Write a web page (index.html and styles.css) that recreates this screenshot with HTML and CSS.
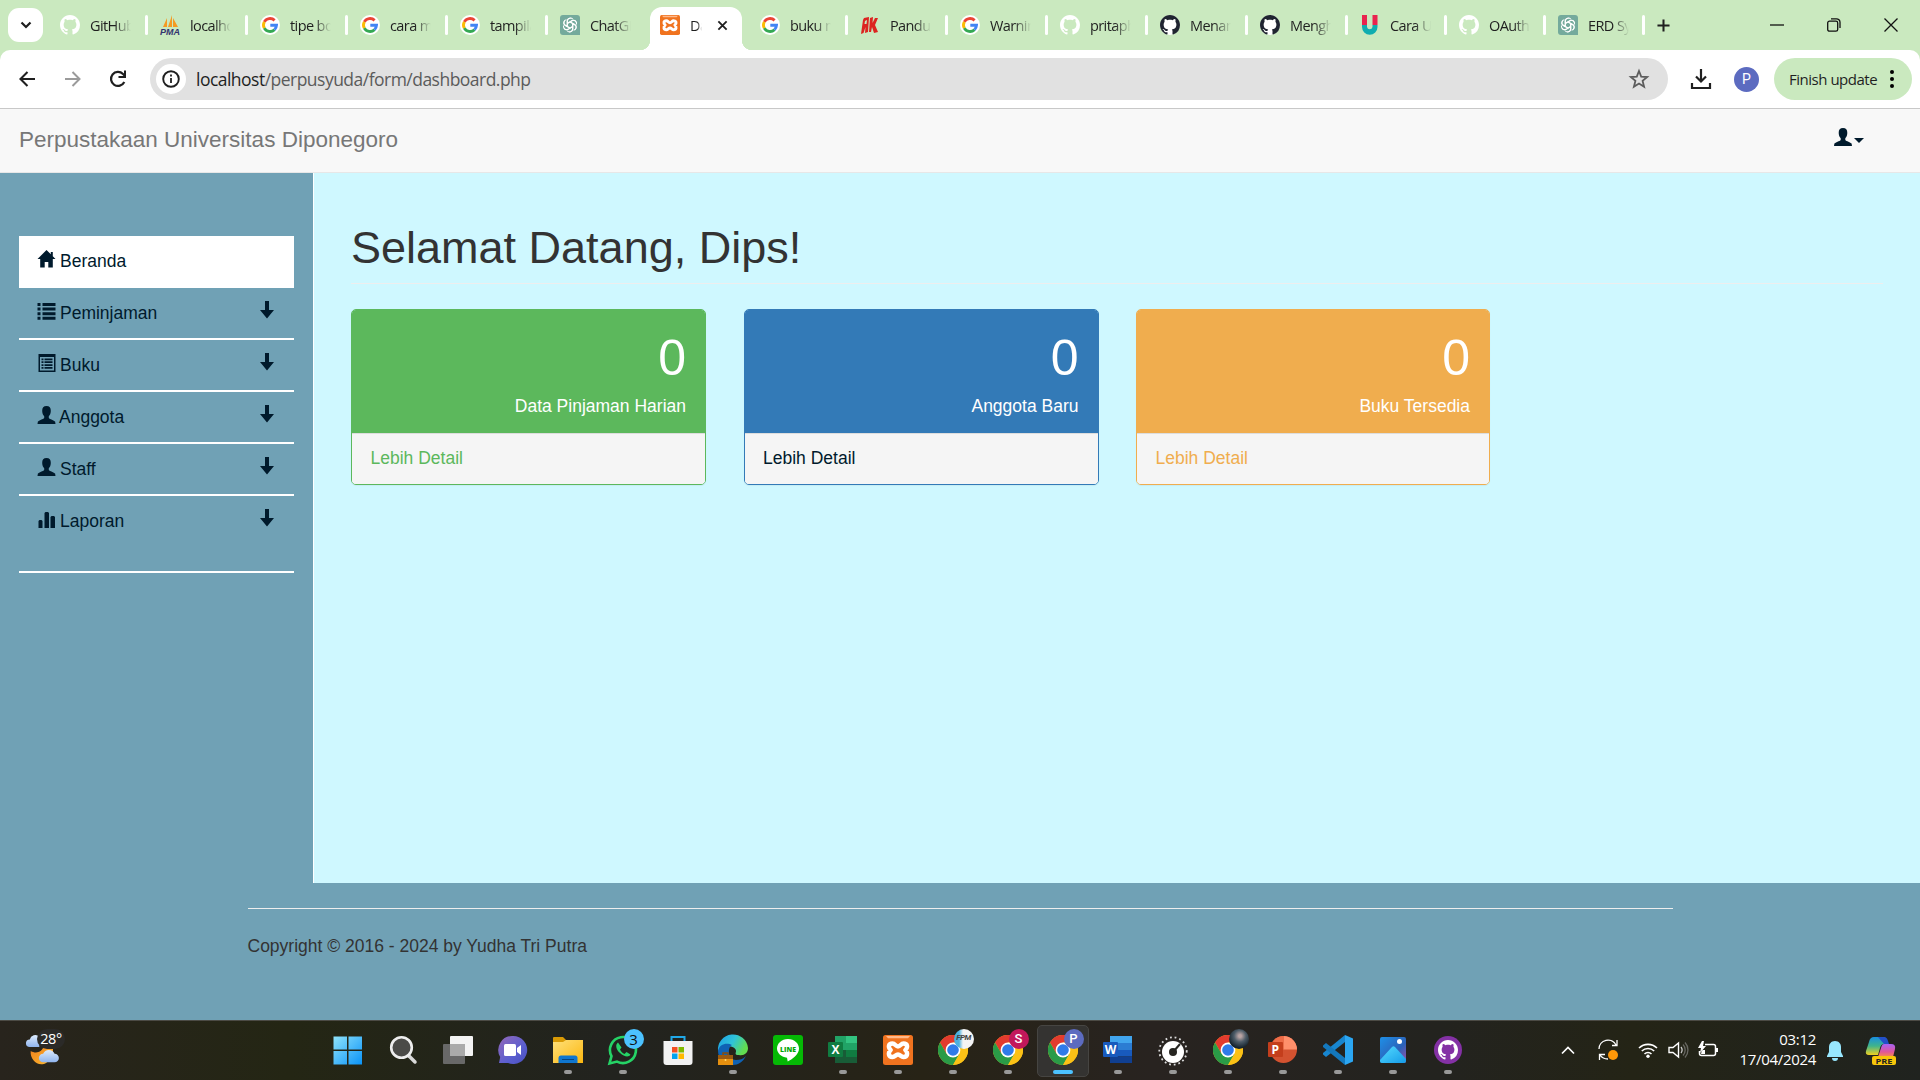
FILE: index.html
```html
<!DOCTYPE html>
<html lang="id">
<head>
<meta charset="utf-8">
<title>Dashboard</title>
<link rel="stylesheet" href="styles.css">
</head>
<body>
<svg class="defs" aria-hidden="true">
  <defs>
    <linearGradient id="gWin" x1="0" y1="0" x2="1" y2="1"><stop offset="0" stop-color="#8fe3fb"/><stop offset="1" stop-color="#0a93f7"/></linearGradient>
    <linearGradient id="gChat" x1="0" y1="0" x2="1" y2="1"><stop offset="0" stop-color="#9468b8"/><stop offset=".6" stop-color="#5b5fd0"/><stop offset="1" stop-color="#4a4fc0"/></linearGradient>
    <linearGradient id="gFold" x1="0" y1="0" x2="1" y2="1"><stop offset="0" stop-color="#ffe07a"/><stop offset="1" stop-color="#fbb70f"/></linearGradient>
    <linearGradient id="gEdge" x1="0" y1="0" x2="1" y2=".4"><stop offset="0" stop-color="#1d9fe6"/><stop offset=".55" stop-color="#2fc3d8"/><stop offset="1" stop-color="#62dd50"/></linearGradient>
    <linearGradient id="gPhoto" x1="0" y1="0" x2="1" y2="1"><stop offset="0" stop-color="#1e90e8"/><stop offset=".6" stop-color="#2c62b8"/><stop offset="1" stop-color="#a04fa8"/></linearGradient>
    <linearGradient id="gHill" x1="0" y1="0" x2="1" y2="1"><stop offset="0" stop-color="#56dcff"/><stop offset="1" stop-color="#159be8"/></linearGradient>
    <linearGradient id="gCopA" x1="0" y1="0" x2="0" y2="1"><stop offset="0" stop-color="#188fe0"/><stop offset=".5" stop-color="#3fb48b"/><stop offset="1" stop-color="#f0d020"/></linearGradient>
    <linearGradient id="gCopB" x1="0" y1="0" x2="0" y2="1"><stop offset="0" stop-color="#a763f5"/><stop offset=".6" stop-color="#e0569b"/><stop offset="1" stop-color="#f78f45"/></linearGradient>
    <linearGradient id="gMoon" x1="0" y1="0" x2="1" y2="1"><stop offset="0" stop-color="#f07c1c"/><stop offset="1" stop-color="#fbbb30"/></linearGradient>
    <linearGradient id="gCloud" x1="0" y1="0" x2="0" y2="1"><stop offset="0" stop-color="#dcebfd"/><stop offset="1" stop-color="#8fb4ee"/></linearGradient>
    <symbol id="octo" viewBox="0 0 16 16"><path d="M8 0C3.58 0 0 3.58 0 8c0 3.54 2.29 6.53 5.47 7.59.4.07.55-.17.55-.38 0-.19-.01-.82-.01-1.49-2.01.37-2.53-.49-2.69-.94-.09-.23-.48-.94-.82-1.13-.28-.15-.68-.52-.01-.53.63-.01 1.08.58 1.23.82.72 1.21 1.87.87 2.33.66.07-.52.28-.87.51-1.07-1.78-.2-3.64-.89-3.64-3.95 0-.87.31-1.59.82-2.15-.08-.2-.36-1.02.08-2.12 0 0 .67-.21 2.2.82.64-.18 1.32-.27 2-.27s1.36.09 2 .27c1.53-1.04 2.2-.82 2.2-.82.44 1.1.16 1.92.08 2.12.51.56.82 1.27.82 2.15 0 3.07-1.87 3.75-3.65 3.95.29.25.54.73.54 1.48 0 1.07-.01 1.93-.01 2.2 0 .21.15.46.55.38A8.01 8.01 0 0 0 16 8c0-4.42-3.58-8-8-8z"/></symbol>
    <symbol id="google" viewBox="0 0 20 20"><circle cx="10" cy="10" r="10" fill="#fff"/><g fill="none" stroke-width="2.9"><path d="M14.6 5.4A6.500 6.500 0 0 0 4.300 6.900" stroke="#ea4335"/><path d="M4.300 6.900a6.500 6.500 0 0 0 0 6.200" stroke="#fbbc05"/><path d="M4.300 13.100a6.500 6.500 0 0 0 10.200 1.600" stroke="#34a853"/><path d="M14.500 14.700a6.500 6.500 0 0 0 2-4.400H10.300" stroke="#4285f4"/></g></symbol>
    <symbol id="gpt" viewBox="0 0 20 20"><path d="M3 0h14a3 3 0 0 1 3 3v17H3a3 3 0 0 1-3-3V3a3 3 0 0 1 3-3z" fill="#74aa9c"/><g fill="none" stroke="#fff" stroke-width="1.05" stroke-linejoin="round"><g id="petal"><path d="M7.4 11.5V6.1a3 3 0 0 1 5.4-1.8M7.4 8.2l4.5-2.6a3 3 0 0 1 4.3 1.7"/></g><use href="#petal" transform="rotate(60 10 10)"/><use href="#petal" transform="rotate(120 10 10)"/><use href="#petal" transform="rotate(180 10 10)"/><use href="#petal" transform="rotate(240 10 10)"/><use href="#petal" transform="rotate(300 10 10)"/></g></symbol>
    <symbol id="xampp" viewBox="0 0 30 30"><rect width="30" height="30" rx="2.5" fill="#f0731f"/><path d="M3 1h24l-2 2.2H5z" fill="#ffb98a"/><path d="M9.5 8.500c-4 0-4.800 3.500-1.800 6.500-3 3-2.200 7 1.800 7 2.700 0 3-2.500 5.500-2.500s2.800 2.500 5.500 2.500c4 0 4.800-4 1.800-7 3-3 2.200-6.500-1.800-6.500-2.700 0-3 3-5.500 3s-2.800-3-5.500-3z" fill="none" stroke="#fff" stroke-width="4.400" stroke-linejoin="round"/></symbol>
    <symbol id="chrome" viewBox="0 0 30 30"><circle cx="15" cy="15" r="15" fill="#fbc116"/><path d="M15 7.500h13A15 15 0 0 0 2 7.500l6.500 11.200L15 15z" fill="#e33b2e"/><path d="M2 7.500A15 15 0 0 0 15 30l6.500-11.200H8.500z" fill="#2a9b47"/><path d="M15 30a15 15 0 0 0 13-22.500H15l6.500 11.300z" fill="#fbc116"/><circle cx="15" cy="15" r="7.400" fill="#fff"/><circle cx="15" cy="15" r="5.800" fill="#2f7bea"/></symbol>
    <symbol id="user" viewBox="0 0 18 18"><path d="M9 0C6 0 4.600 1.800 4.700 5c.1 2.500.9 4.200 2 5.200v1.700C5.800 13.300 1.300 14 .4 15.600L0 18h18l-.4-2.400c-.9-1.600-5.400-2.300-6.300-3.700v-1.700c1.100-1 1.900-2.700 2-5.200C13.400 1.800 12 0 9 0z"/></symbol>
    <symbol id="down" viewBox="0 0 14 18"><path d="M5 0h4v9h5l-7 8.500L0 9h5z"/></symbol>
  </defs>
</svg>

<header class="tabs">
  <div class="tab-search"><svg width="12" height="8" viewBox="0 0 12 8"><path d="M1.500 1.500 6 6l4.500-4.500" fill="none" stroke="#1f1f1f" stroke-width="2.200"/></svg></div>
  <div class="tab"><svg class="fav" fill="#fff"><use href="#octo"/></svg><span class="tt">GitHub</span></div>
  <div class="tab"><svg class="fav" viewBox="0 0 20 20"><path d="M3 12 7 3v9zM8 12 12 0v12zM13 12V3l5 9z" fill="#f59a22"/><text x="0" y="19.500" class="pma" textLength="20" lengthAdjust="spacingAndGlyphs">PMA</text></svg><span class="tt">localhost</span></div>
  <div class="tab"><svg class="fav"><use href="#google"/></svg><span class="tt">tipe boo</span></div>
  <div class="tab"><svg class="fav"><use href="#google"/></svg><span class="tt">cara me</span></div>
  <div class="tab"><svg class="fav"><use href="#google"/></svg><span class="tt">tampila</span></div>
  <div class="tab no-sep"><svg class="fav"><use href="#gpt"/></svg><span class="tt">ChatGP</span></div>
  <div class="tab active"><svg class="fav"><use href="#xampp"/></svg><span class="tt">Da</span><svg class="close" viewBox="0 0 12 12"><path d="m1.500 1.500 9 9m0-9-9 9" stroke="#1f1f1f" stroke-width="2"/></svg></div>
  <div class="tab"><svg class="fav"><use href="#google"/></svg><span class="tt">buku m</span></div>
  <div class="tab"><svg class="fav" viewBox="0 0 20 20"><path d="M4 3 9 2 8 17l-3 1 .5-6-2 6L1 19 3 5zM10 3l3-1-.5 6L15 3h3l-3 7 3 7-4 1-2-6-1 5H9z" fill="#dc2420"/><path d="m5 6 2-1-.5 4H4.500z" fill="#cae9bf"/></svg><span class="tt">Pandua</span></div>
  <div class="tab"><svg class="fav"><use href="#google"/></svg><span class="tt">Warning</span></div>
  <div class="tab"><svg class="fav" fill="#fff"><use href="#octo"/></svg><span class="tt">pritaph</span></div>
  <div class="tab"><svg class="fav dark"><use href="#octo"/></svg><span class="tt">Menam</span></div>
  <div class="tab"><svg class="fav dark"><use href="#octo"/></svg><span class="tt">Mengh</span></div>
  <div class="tab late"><svg class="fav" viewBox="0 0 20 20"><path d="M2 0h5v10H2zM12.500 0h5v10h-5z" fill="#e9244f"/><path d="M2 10v2a7.700 7.700 0 0 0 15.500 0v-2h-5v2a2.800 2.800 0 0 1-5.500 0v-2z" fill="#10adb0"/></svg><span class="tt">Cara U</span></div>
  <div class="tab late"><svg class="fav" fill="#fff"><use href="#octo"/></svg><span class="tt">OAuth</span></div>
  <div class="tab late"><svg class="fav"><use href="#gpt"/></svg><span class="tt">ERD Sy</span></div>
  <svg class="plus" viewBox="0 0 14 14"><path d="M7 .5v13M.5 7h13" stroke="#1f1f1f" stroke-width="2.200"/></svg>
  <div class="wincontrols">
    <svg viewBox="0 0 14 14"><path d="M0 7h14" stroke="#111" stroke-width="1.300"/></svg>
    <svg viewBox="0 0 14 14"><path d="M4 .8h5.500a3.500 3.500 0 0 1 3.500 3.500V10" fill="none" stroke="#111" stroke-width="1.300"/><rect x=".7" y="3.200" width="10" height="10" rx="1.800" fill="none" stroke="#111" stroke-width="1.300"/></svg>
    <svg viewBox="0 0 14 14"><path d="m.5.5 13 13m0-13-13 13" stroke="#111" stroke-width="1.300"/></svg>
  </div>
</header>

<div class="toolwrap">
<div class="toolbar">
  <svg class="nav" viewBox="0 0 20 20"><path d="M18 10H3.500m7-7-7 7 7 7" fill="none" stroke="#1f1f1f" stroke-width="2.100"/></svg>
  <svg class="nav" viewBox="0 0 20 20"><path d="M2 10h14.500m-7-7 7 7-7 7" fill="none" stroke="#9b9b9b" stroke-width="2"/></svg>
  <svg class="nav" viewBox="0 0 20 20"><path d="M16.300 13A7 7 0 1 1 15 5l2 2" fill="none" stroke="#1f1f1f" stroke-width="2.200"/><path d="M18 1.500V9h-7.500V7h5.500V1.500z" fill="#1f1f1f"/></svg>
  <div class="omnibox">
    <div class="info"><svg viewBox="0 0 20 20"><circle cx="10" cy="10" r="7.800" fill="none" stroke="#1f1f1f" stroke-width="1.900"/><path d="M10 9v5M10 5.600v1.900" stroke="#1f1f1f" stroke-width="1.800"/></svg></div>
    <div class="url"><b>localhost</b>/perpusyuda/form/dashboard.php</div>
    <svg class="star" viewBox="0 0 20 20"><path d="m10 2 2.200 5.600 6 .4-4.600 3.900 1.500 5.900L10 14.600l-5.100 3.200 1.500-5.900L1.800 8l6-.4z" fill="none" stroke="#5c5c5c" stroke-width="1.800"/></svg>
  </div>
  <svg class="dl" viewBox="0 0 20 20"><path d="M10 0v12M5 7.500l5 5 5-5M1 14v5h18v-5" fill="none" stroke="#1f1f1f" stroke-width="2.200"/></svg>
  <div class="avatar">P</div>
  <div class="update"><span>Finish update</span><svg viewBox="0 0 4 18"><circle cx="2" cy="2" r="2"/><circle cx="2" cy="9" r="2"/><circle cx="2" cy="16" r="2"/></svg></div>
</div>
</div>

<nav class="navbar">
  <div class="brand">Perpustakaan Universitas Diponegoro</div>
  <div class="account"><svg><use href="#user"/></svg><i class="caret"></i></div>
</nav>

<div class="page">
  <aside class="sidebar">
    <ul class="menu">
      <li class="on"><svg class="mi" viewBox="0 0 18 18"><path d="M9 0 0 9h2.700v8.500h4.500V12h3.600v5.500h4.500V9H18l-2.700-2.700V2h-2v2.200z"/></svg><span>Beranda</span></li>
      <li><svg class="mi" viewBox="0 0 18 18"><path d="M0 1h3v3H0zM5 1h13v3H5zM0 5.600h3v3H0zM5 5.600h13v3H5zM0 10.200h3v3H0zM5 10.200h13v3H5zM0 14.800h3v3H0zM5 14.800h13v3H5z"/></svg><span>Peminjaman</span><svg class="dn"><use href="#down"/></svg></li>
      <li><svg class="mi" viewBox="0 0 18 18"><path fill-rule="evenodd" d="M1 0h17v18H1zM2.500 3v13.500h14V3zM4 4.500h2v1.700H4zm3 0h8v1.700H7zM4 7.300h2V9H4zm3 0h8V9H7zm-3 2.900h2v1.700H4zm3 0h8v1.700H7zM4 13h2v1.700H4zm3 0h8v1.700H7z"/></svg><span>Buku</span><svg class="dn"><use href="#down"/></svg></li>
      <li><svg class="mi"><use href="#user"/></svg><span class="an">Anggota</span><svg class="dn"><use href="#down"/></svg></li>
      <li><svg class="mi"><use href="#user"/></svg><span>Staff</span><svg class="dn"><use href="#down"/></svg></li>
      <li class="last"><svg class="mi" viewBox="0 0 18 18"><path d="M1 11l1-1h2l1 1v7H1zM7 3l1-1h2.500l1 1v15H7zM13 7l1-1h2.500l1 1v11H13z"/></svg><span>Laporan</span><svg class="dn"><use href="#down"/></svg></li>
    </ul>
  </aside>
  <main class="main">
    <h1>Selamat Datang, Dips!</h1>
    <div class="cards">
      <section class="card green"><div class="top"><div class="num">0</div><div class="lab">Data Pinjaman Harian</div></div><div class="foot">Lebih Detail</div></section>
      <section class="card blue"><div class="top"><div class="num">0</div><div class="lab">Anggota Baru</div></div><div class="foot">Lebih Detail</div></section>
      <section class="card orange"><div class="top"><div class="num">0</div><div class="lab">Buku Tersedia</div></div><div class="foot">Lebih Detail</div></section>
    </div>
  </main>
</div>
<footer class="footer"><p>Copyright © 2016 - 2024 by Yudha Tri Putra</p></footer>

<div class="taskbar">
  <div class="weather"><svg viewBox="0 0 44 44"><path d="M5 20a4 4 0 0 1 0-8 6 6 0 0 1 10-3v11z" fill="url(#gCloud)"/><path d="M6 24c5 3 12 2 14-6h9c2 10-4 20-12 20-6 0-12-7-11-14z" fill="url(#gMoon)"/><path d="M19 36a4.500 4.500 0 0 1 0-9 6.500 6.500 0 0 1 12 0 4.500 4.500 0 0 1 0 9z" fill="url(#gCloud)"/></svg><span>28°</span></div>
  <div class="apps">
    <div class="app"><svg viewBox="0 0 30 30"><path d="M.5 1.500H14v13H.5zM15.500 1.500H29v13H15.500zM.5 16H14v13.500H.5zM15.500 16H29v13.500H15.500z" fill="url(#gWin)"/></svg></div>
    <div class="app"><svg viewBox="0 0 30 30"><path d="m21 21 6 6" stroke="#d9d9d9" stroke-width="3.500" stroke-linecap="round"/><circle cx="13.500" cy="12.500" r="10.300" fill="#4b4b48" stroke="#eee" stroke-width="2.600"/></svg></div>
    <div class="app"><svg viewBox="0 0 30 30"><rect y="9" width="22" height="20" rx="1" fill="#686868"/><rect x="7" y="1" width="23" height="20" rx="1" fill="#f3f3f3"/><path d="M7 9h15v12H7z" fill="#aaa"/></svg></div>
    <div class="app"><svg viewBox="0 0 30 30"><path d="M15 1a14 14 0 1 1-5 27H1l1.200-6A14 14 0 0 1 15 1z" fill="url(#gChat)"/><rect x="6" y="9" width="12" height="12" rx="1.500" fill="#fff"/><path d="m19 13 4-3v10l-4-3z" fill="#fff"/></svg></div>
    <div class="app run"><svg viewBox="0 0 30 30"><path d="M0 3q0-1 1-1h9l3 3v4H0z" fill="#d99a05"/><path d="M0 7h10l3-2h17v23H0z" fill="url(#gFold)"/><path d="M5.500 28v-5q0-2.500 2.500-2.500h14q2.500 0 2.500 2.500v5z" fill="#0f76cf"/><path d="M9 24.500h12" stroke="#07447f"/></svg></div>
    <div class="app run"><svg viewBox="0 0 30 30"><path d="m1.500 28.500 2-7.300A13 13 0 1 1 9 26.600z" fill="none" stroke="#25d366" stroke-width="2.600"/><path d="M10 7.500c-3 2-2 7 2 10.500s8.500 5 10.500 1.500l-4-2.500-2 2c-2-1-3.500-2.500-4.500-4.500l1.500-2z" fill="#25d366"/></svg><b class="badge sky">3</b></div>
    <div class="app"><svg viewBox="0 0 30 30"><path d="M8.500 8V2h13v6" fill="none" stroke="#20a8e8" stroke-width="2"/><path d="M.5 6h29v21q0 3-3 3h-23q-3 0-3-3z" fill="#f2f2f2"/><path d="M9 12h5.500v5.500H9z" fill="#f25022"/><path d="M15.500 12H21v5.500h-5.500z" fill="#7fba00"/><path d="M9 18.500h5.500V24H9z" fill="#00a4ef"/><path d="M15.500 18.500H21V24h-5.500z" fill="#ffb900"/></svg></div>
    <div class="app run"><svg viewBox="0 0 30 30"><path d="M0 16A15 15 0 0 1 30 13c0 5-4 8-9 7-5 0-3-2-3-4 0-5-10-7-18 0z" fill="url(#gEdge)"/><path d="M0 16C1 9 9 7 14 10c-5 2-4 15 4 15 4 0 7-1 10-4-3 6-8 9-13 9C7 30 0 24 0 16z" fill="#0f62b4"/><path d="M0 20h15v10H0z" fill="#e6900f"/><path d="M0 20h15v4H0z" fill="#9a5a10"/><path d="M5 20v-2h5v2" fill="none" stroke="#8a4d0b" stroke-width="1.500"/><circle cx="7.500" cy="25" r="1" fill="#ffd870"/></svg></div>
    <div class="app"><svg viewBox="0 0 30 30"><rect width="30" height="30" rx="3" fill="#05b905"/><path d="M15 4C8.500 4 4 8.500 4 13.500c0 4.800 4.500 8.500 10 9.300l.7 3.700C19 24.500 26 19.500 26 13.500 26 8.500 21.500 4 15 4z" fill="#fff"/><text x="7" y="16.500" class="line" textLength="16" lengthAdjust="spacingAndGlyphs">LINE</text></svg></div>
    <div class="app run"><svg viewBox="0 0 30 30"><path d="M7 1h11v14H7z" fill="#21a366"/><path d="M18 1h11v7H18z" fill="#33c481"/><path d="M18 8h11v7H18z" fill="#21a366"/><path d="M7 15h22v13H7z" fill="#185c37"/><path d="M18 15h11v7H18z" fill="#107c41"/><rect y="7" width="15" height="15" rx="1" fill="#107c41"/><text x="3.500" y="19" class="ltr">X</text></svg></div>
    <div class="app run"><svg><use href="#xampp"/></svg></div>
    <div class="app run"><svg><use href="#chrome"/></svg><b class="badge fpm"><i>FPM</i></b></div>
    <div class="app run"><svg><use href="#chrome"/></svg><b class="badge rose">S</b></div>
    <div class="app run cur"><svg><use href="#chrome"/></svg><b class="badge indigo">P</b></div>
    <div class="app run"><svg viewBox="0 0 30 30"><path d="M7 1h22v7H7z" fill="#41a5ee"/><path d="M7 8h22v7H7z" fill="#2b7cd3"/><path d="M7 15h22v6.500H7z" fill="#185abd"/><path d="M7 21.500h22V28H7z" fill="#103f91"/><rect y="7" width="15" height="15" rx="1" fill="#185abd"/><text x="1.800" y="19" class="ltr">W</text></svg></div>
    <div class="app run"><svg viewBox="0 0 30 30"><circle cx="15" cy="16" r="13.700" fill="none" stroke="#ddd" stroke-width="1.800" stroke-dasharray="1.800 2.900"/><circle cx="15" cy="17" r="11" fill="#fff"/><circle cx="15" cy="17" r="4" fill="#262520"/><path d="m16 16 6-7" stroke="#262520" stroke-width="2"/></svg></div>
    <div class="app run"><svg><use href="#chrome"/></svg><b class="badge photo"></b></div>
    <div class="app run"><svg viewBox="0 0 30 30"><circle cx="15.500" cy="14.500" r="13.500" fill="#d35230"/><path d="M15.500 1A13.500 13.500 0 0 1 29 14.500H15.500z" fill="#ff8f6b"/><path d="M15.500 1A13.500 13.500 0 0 0 2 14.500h13.500z" fill="#ed6c47"/><rect y="7" width="15" height="15" rx="1" fill="#c43e1c"/><text x="3.500" y="19" class="ltr">P</text></svg></div>
    <div class="app run"><svg viewBox="0 0 30 30"><path d="M22 7 3 22l-3-2.500V18L22 0z" fill="#1886d0"/><path d="M22 23 3 8l-3 2.500V12l22 18z" fill="#1478bd"/><path d="M22 0l8 3.500v23L22 30z" fill="#2ba6f2"/></svg></div>
    <div class="app run"><svg viewBox="0 0 30 30"><rect x="2" y="2" width="26" height="26" rx="2" fill="url(#gPhoto)"/><path d="m2 25 12-13q1.500-1.500 3 0l11 12v2q0 2-2 2H4q-2 0-2-2z" fill="url(#gHill)"/><circle cx="21.500" cy="6.500" r="2.500" fill="#fff"/></svg></div>
    <div class="app run"><svg viewBox="0 0 30 30"><circle cx="15" cy="15" r="14" fill="#8431a5"/><svg x="5" y="5" width="20" height="20" fill="#fff"><use href="#octo"/></svg></svg></div>
  </div>
  <div class="tray">
    <svg viewBox="0 0 20 20"><path d="m4 13.500 6-6 6 6" fill="none" stroke="#fff" stroke-width="1.700"/></svg>
    <svg viewBox="0 0 20 20" class="sync"><path d="M1 9A9 9 0 0 1 18 5M19 0v5.500h-5M1.500 20v-5.500H7M2 15c2 3 5 4 8 4" fill="none" stroke="#fff" stroke-width="1.300"/><circle cx="15" cy="15" r="5" fill="#ff9808"/></svg>
    <svg viewBox="0 0 20 20" class="wifi"><path d="M1 8a13 13 0 0 1 18 0M3.800 11a9 9 0 0 1 12.400 0M6.500 14a5 5 0 0 1 7 0" fill="none" stroke="#fff" stroke-width="1.600"/><circle cx="10" cy="16.300" r="1.700" fill="#fff"/></svg>
    <svg viewBox="0 0 20 20"><path d="M1 7.500h4L10.500 3v14L5 12.500H1z" fill="none" stroke="#fff" stroke-width="1.400"/><path d="M13 7a5 5 0 0 1 0 6" fill="none" stroke="#ccc" stroke-width="1.300"/><path d="M15 4.500a8 8 0 0 1 0 11M17 2.500a11 11 0 0 1 0 15" fill="none" stroke="#686862" stroke-width="1.300"/></svg>
    <svg viewBox="0 0 20 20"><path d="M7 4.500h8.500q2 0 2 2v7q0 2-2 2h-12q-2 0-2-2V11" fill="none" stroke="#fff" stroke-width="1.500"/><path d="M18 8h2v4h-2z" fill="#fff"/><path d="M4 1 0 8h3l-1 5 6-7H5l1-5zM4 10h3v4H3z" fill="#fff"/></svg>
  </div>
  <div class="clock">03:12<br>17/04/2024</div>
  <svg class="bell" viewBox="0 0 16 20"><path d="M8 0C4 0 2 3 2 6v5l-2 4v1h16v-1l-2-4V6c0-3-2-6-6-6zM5 17h6a3 3 0 0 1-6 0z" fill="#98e8ff"/></svg>
  <svg class="copilot" viewBox="0 0 30 30"><path d="M8 1h9q3 0 4 4l1 3h-4q-3 0-4 4l-2 7H3q-4 0-3-4L3 6q1-5 5-5z" fill="url(#gCopA)"/><path d="M12 1h6q3 0 4 4l1 3h-5z" fill="#2350c8"/><path d="M18 8h7q5 0 4 5l-2 8H12l3-9q1-4 3-4z" fill="url(#gCopB)"/><rect x="6" y="20" width="24" height="9" rx="2" fill="#f7c60a"/><text x="9.500" y="27.600" class="pre" textLength="17" lengthAdjust="spacingAndGlyphs">PRE</text></svg>
</div>
</body>
</html>
```
FILE: styles.css
```css
* { box-sizing: border-box; }
html, body { margin: 0; height: 1080px; overflow: hidden; }
body { display: flex; flex-direction: column; font-family: "Liberation Sans", Arial, sans-serif; font-size: 17.5px; line-height: 25px; color: #333; background: #70a1b5; }
svg { display: block; flex: none; overflow: visible; }
.defs { position: absolute; width: 0; height: 0; }

/* browser tab strip */
.tabs { height: 50px; flex: none; display: flex; background: #cae9bf; padding-left: 8px; font-family: "Open Sans", "Noto Sans", sans-serif; font-size: 14.5px; color: #1f1f1f; }
.tab-search { width: 35px; height: 34px; margin: 8px 7px 0 0; border-radius: 11px; background: #fff; display: flex; align-items: center; justify-content: center; }
.tab { width: 100px; flex: none; display: flex; align-items: center; padding-left: 10px; position: relative; }
.tab.late { width: 99px; }
.tab::after { content: ""; position: absolute; right: 2px; top: 15px; width: 3px; height: 20px; border-radius: 2px; background: #fff; }
.tab.no-sep::after, .tab.active::after { display: none; }
.fav { width: 20px; height: 20px; }
.fav.dark { fill: #1f2430; background: #fff; border-radius: 50%; }
.tt { width: 41px; margin-left: 10px; overflow: hidden; white-space: nowrap; letter-spacing: -.6px; -webkit-mask-image: linear-gradient(90deg, #000 60%, transparent); mask-image: linear-gradient(90deg, #000 60%, transparent); }
.tab.active { width: 92px; height: 43px; margin: 7px 8px 0 0; padding-bottom: 7px; border-radius: 12px 12px 0 0; background: #fff; isolation: isolate; }
.tab.active::before { content: ""; position: absolute; left: -10px; top: 0; width: 112px; height: 43px; background: radial-gradient(circle at 0 0, transparent 10px, #fff 10.5px) left bottom / 10px 10px no-repeat, radial-gradient(circle at 100% 0, transparent 10px, #fff 10.5px) right bottom / 10px 10px no-repeat; }
.tab.active .tt { width: 12px; }
.tab.active .close { width: 11px; height: 11px; margin-left: 15px; }
.plus { width: 13px; height: 13px; margin: 19px 0 0 10px; }
.wincontrols { margin-left: auto; display: flex; gap: 43px; padding: 18px 22px 0 0; }
.wincontrols svg { width: 14px; height: 14px; }

/* browser toolbar */
.toolwrap { background: #cae9bf; flex: none; }
.toolbar { height: 59px; background: #fff; border-radius: 10px 10px 0 0; border-bottom: 1px solid #c8c8c8; display: flex; align-items: center; padding-left: 17px; font-family: "Open Sans", "Noto Sans", sans-serif; }
.nav { width: 20px; height: 20px; margin-right: 25.5px; }
.omnibox { width: 1518px; height: 42px; margin-left: -3.5px; background: #e1e1e1; border-radius: 21px; display: flex; align-items: center; padding: 0 19px 0 6px; }
.info { width: 30px; height: 30px; border-radius: 50%; background: #fff; display: flex; align-items: center; justify-content: center; }
.info svg { width: 20px; height: 20px; }
.url { margin-left: 10px; flex: 1; color: #5b5b5b; font-size: 17.5px; letter-spacing: -.52px; }
.url b { font-weight: 400; color: #1f1f1f; }
.star { width: 20px; height: 20px; }
.dl { width: 20px; height: 20px; margin-left: 23px; }
.avatar { width: 25px; height: 25px; margin-left: 23px; border-radius: 50%; background: #5c6bc0; color: #fff; font: 14px/25px Roboto, sans-serif; text-align: center; }
.update { width: 138px; height: 42px; margin-left: 15px; border-radius: 21px; background: #cae9bf; display: flex; align-items: center; padding-left: 15px; font-size: 15px; letter-spacing: -.48px; color: #1f1f1f; }
.update span { width: 101px; white-space: nowrap; }
.update svg { width: 4px; height: 18px; }

/* site navbar */
.navbar { height: 64px; flex: none; background: #f8f8f8; border-bottom: 1px solid #e7e7e7; display: flex; justify-content: space-between; padding: 0 56px 0 19px; }
.brand { font-size: 22.5px; line-height: 62px; color: #777; }
.account { display: flex; fill: #001a2c; }
.account svg { width: 18px; height: 18px; margin-top: 19px; }
.caret { width: 0; height: 0; margin: 29px 0 0 2px; border: 5px solid transparent; border-top-color: #001a2c; border-bottom: 0; }

/* page columns */
.page { height: 710px; flex: none; display: flex; }
.sidebar { width: 313px; flex: none; padding: 63px 19px 0; }
.menu { list-style: none; margin: 0; padding: 0; color: #001a2c; fill: #001a2c; }
.menu li { height: 52px; border-bottom: 2px solid #fff; display: flex; align-items: flex-start; padding: 12px 19px 0 18px; }
.menu .on { background: #fff; }
.menu .last { height: 77px; }
.menu .mi { width: 19px; height: 18px; margin-top: 2px; }
.menu span { margin: 1px 0 0 4px; }
.menu .an { margin-left: 3px; }
.menu .dn { width: 14px; height: 18px; margin: 1px 1px 0 auto; }
.main { flex: 1; background: #cff8ff; border-left: 1px solid #fff; padding: 44px 37px 0; }
h1 { margin: 0; height: 67px; border-bottom: 1px solid #eee; font-weight: 400; font-size: 45px; line-height: 62px; }
.cards { display: grid; grid-template-columns: 355px 355px 354px; gap: 37.5px; margin-top: 25px; }
.card { height: 176px; border: 1px solid; border-radius: 5px; overflow: hidden; box-shadow: 0 1px 1px rgba(0,0,0,.05); }
.top { height: 123px; padding: 20px 19px 0; text-align: right; color: #fff; }
.num { font-size: 50px; line-height: 56px; }
.lab { line-height: 25px; margin-top: 8px; }
.foot { height: 51px; border-top: 1px solid #ddd; background: #f5f5f5; padding: 12px 18.5px; line-height: 25px; }
.green { border-color: #5cb85c; color: #5cb85c; } .green .top { background: #5cb85c; }
.blue { border-color: #337ab7; color: #001a2c; } .blue .top { background: #337ab7; }
.orange { border-color: #f0ad4e; color: #f0ad4e; } .orange .top { background: #f0ad4e; }
.footer { flex: 1; margin: 25px 247px 0 248px; border-top: 1px solid #eee; }
.footer p { margin: 25px 0 0 -.5px; }

/* taskbar */
.taskbar { height: 60px; flex: none; display: flex; background: linear-gradient(90deg, #28241d, #242614 15%, #22231f 32%, #272316 48%, #282320 60%, #23231f 75%, #242416 85%, #20231f); border-top: 1px solid #4c4b45; font-family: "Open Sans", "Noto Sans", sans-serif; color: #fff; }
.weather { width: 320px; flex: none; display: flex; padding: 7px 0 0 25px; position: relative; }
.weather svg { width: 42px; height: 42px; }
.weather span { position: absolute; left: 37px; top: 8px; width: 28px; height: 20px; border-radius: 10px; background: #2b2a28; font-size: 14.5px; line-height: 20px; letter-spacing: -.4px; text-align: center; }
.apps { display: flex; flex: none; }
.app { width: 55px; display: flex; justify-content: center; padding-top: 14px; position: relative; }
.app > svg { width: 30px; height: 30px; }
.run::after { content: ""; position: absolute; left: 23.5px; top: 49px; width: 8px; height: 4px; border-radius: 2px; background: #999; }
.cur::before { content: ""; position: absolute; left: 2px; top: 4px; width: 50px; height: 50px; border-radius: 5px; background: #343331; border: 1px solid #464542; }
.cur::after { left: 17.5px; width: 20px; background: #4cc2ff; }
.cur svg { position: relative; }
.badge { position: absolute; left: 28.5px; top: 8px; width: 20px; height: 20px; border-radius: 50%; font: 500 13px/20px Roboto, sans-serif; text-align: center; }
.sky { background: #4cc2ff; color: #111; font: 15px/20px "Open Sans", sans-serif; }
.rose { background: #c2185b; } .indigo { background: #5c6bc0; }
.fpm { background: linear-gradient(90deg, #4bb0e0 25%, #f4f4f4 45%); color: #444; }
.fpm i { font-size: 8px; font-weight: 700; letter-spacing: -.5px; display: block; line-height: 18px; }
.photo { background: radial-gradient(circle at 55% 35%, #b9a4a4 8%, #4d5c68 35%, #14222c 70%); }
.ltr { font: 700 12px "Open Sans", sans-serif; fill: #fff; }
.line { font: 800 6.5px "Open Sans", sans-serif; fill: #05a805; }
.pma { font: italic 700 8.5px "Liberation Sans", sans-serif; fill: #34346f; }
.pre { font: 700 7.5px "Open Sans", sans-serif; fill: #222; }
.tray { display: flex; flex: none; margin-left: 83px; padding-top: 19px; gap: 10px; }
.tray svg { width: 20px; height: 20px; }
.tray .sync { margin-left: 10px; }
.tray .wifi { margin-left: 10px; }
.clock { width: 98px; flex: none; text-align: right; font-size: 15px; line-height: 20px; padding-top: 8px; letter-spacing: -.3px; }
.bell { width: 16px; height: 20px; margin: 20px 0 0 11px; }
.copilot { width: 30px; height: 30px; margin: 15px 0 0 23px; }
```
